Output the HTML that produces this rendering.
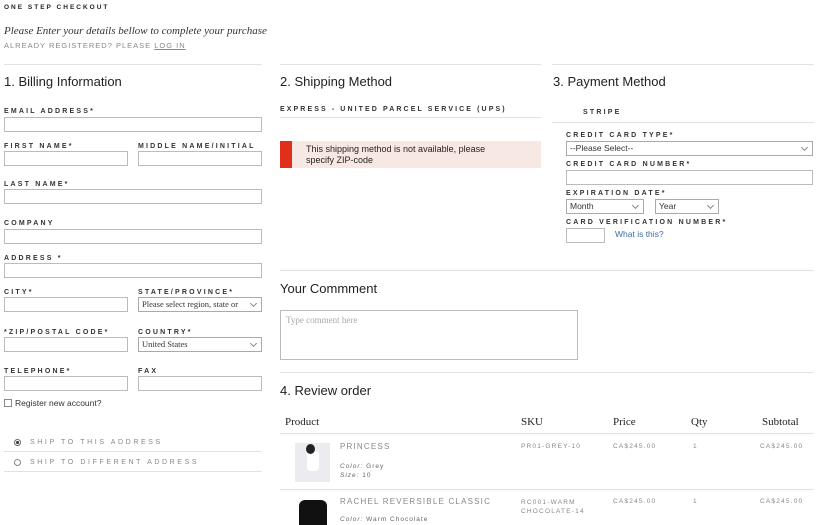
<!DOCTYPE html>
<html><head><meta charset="utf-8"><style>
*{box-sizing:border-box;margin:0;padding:0}
body{width:825px;height:525px;overflow:hidden;background:#fff;position:relative;font-family:"Liberation Sans",sans-serif;color:#222}
.a{position:absolute;white-space:nowrap}
.lb{position:absolute;font-size:7px;font-weight:bold;letter-spacing:2.2px;color:#333;white-space:nowrap}
.in{position:absolute;border:1px solid #bbb;background:#fff;height:15px}
.hr{position:absolute;height:1px;background:#e2e2e2}
.h{position:absolute;font-size:13px;color:#222;white-space:nowrap}
.sel{position:absolute;border:1px solid #aaa;height:15px;font-size:8.5px;padding:1px 3px;color:#333}
.sel:after{content:"";position:absolute;right:5px;top:3px;width:4px;height:4px;border-right:1px solid #888;border-bottom:1px solid #888;transform:rotate(45deg)}
.ser{font-family:"Liberation Serif",serif}
.g{color:#888;font-size:7px;letter-spacing:1.2px}
</style></head><body>
<div class="a" style="left:4px;top:4px;font-size:6.5px;font-weight:bold;letter-spacing:2px">ONE STEP CHECKOUT</div>
<div class="a ser" style="left:4px;top:25px;font-size:11px;font-style:italic;color:#333">Please Enter your details bellow to complete your purchase</div>
<div class="a" style="left:4px;top:41px;font-size:7.5px;letter-spacing:1px;color:#888">ALREADY REGISTERED? PLEASE <span style="text-decoration:underline">LOG IN</span></div>
<div class="hr" style="left:4px;top:64px;width:258px"></div>
<div class="hr" style="left:280px;top:64px;width:261px"></div>
<div class="hr" style="left:552px;top:64px;width:262px"></div>
<div class="h" style="left:4px;top:74px">1. Billing Information</div>
<div class="h" style="left:280px;top:74px">2. Shipping Method</div>
<div class="h" style="left:553px;top:74px">3. Payment Method</div>

<div class="lb" style="left:4px;top:108px">EMAIL ADDRESS*</div>
<div class="in" style="left:4px;top:117px;width:258px"></div>
<div class="lb" style="left:4px;top:143px">FIRST NAME*</div>
<div class="lb" style="left:138px;top:143px">MIDDLE NAME/INITIAL</div>
<div class="in" style="left:4px;top:151px;width:124px"></div>
<div class="in" style="left:138px;top:151px;width:124px"></div>
<div class="lb" style="left:4px;top:181px">LAST NAME*</div>
<div class="in" style="left:4px;top:189px;width:258px"></div>
<div class="lb" style="left:4px;top:220px">COMPANY</div>
<div class="in" style="left:4px;top:229px;width:258px"></div>
<div class="lb" style="left:4px;top:255px">ADDRESS *</div>
<div class="in" style="left:4px;top:263px;width:258px"></div>
<div class="lb" style="left:4px;top:289px">CITY*</div>
<div class="lb" style="left:138px;top:289px">STATE/PROVINCE*</div>
<div class="in" style="left:4px;top:297px;width:124px"></div>
<div class="sel ser" style="left:138px;top:297px;width:124px">Please select region, state or</div>
<div class="lb" style="left:4px;top:329px">*ZIP/POSTAL CODE*</div>
<div class="lb" style="left:138px;top:329px">COUNTRY*</div>
<div class="in" style="left:4px;top:337px;width:124px"></div>
<div class="sel ser" style="left:138px;top:337px;width:124px">United States</div>
<div class="lb" style="left:4px;top:368px">TELEPHONE*</div>
<div class="lb" style="left:138px;top:368px">FAX</div>
<div class="in" style="left:4px;top:376px;width:124px"></div>
<div class="in" style="left:138px;top:376px;width:124px"></div>
<div class="a" style="left:4px;top:399px;width:8px;height:8px;border:1px solid #888"></div>
<div class="a" style="left:15px;top:398px;font-size:8.5px;color:#333">Register new account?</div>
<div class="a" style="left:14px;top:439px;width:7px;height:7px;border:1px solid #666;border-radius:50%"><div style="margin:1px;width:3px;height:3px;background:#333;border-radius:50%"></div></div>
<div class="a g" style="left:30px;top:439px;letter-spacing:2.6px;font-size:7px">SHIP TO THIS ADDRESS</div>
<div class="hr" style="left:4px;top:451px;width:258px"></div>
<div class="a" style="left:14px;top:459px;width:7px;height:7px;border:1px solid #888;border-radius:50%"></div>
<div class="a g" style="left:30px;top:459px;letter-spacing:2.6px;font-size:7px">SHIP TO DIFFERENT ADDRESS</div>
<div class="hr" style="left:4px;top:471px;width:258px"></div>

<div class="lb" style="left:280px;top:106px;letter-spacing:2.1px">EXPRESS - UNITED PARCEL SERVICE (UPS)</div>
<div class="hr" style="left:280px;top:117px;width:261px"></div>
<div class="a" style="left:280px;top:141px;width:261px;height:27px;background:#f8e8e4"></div>
<div class="a" style="left:280px;top:141px;width:12px;height:27px;background:#e0301a"></div>
<div class="a" style="left:306px;top:144px;font-size:9px;line-height:10.5px;color:#222">This shipping method is not available, please<br>specify ZIP-code</div>

<div class="lb" style="left:583px;top:109px">STRIPE</div>
<div class="hr" style="left:552px;top:122px;width:262px"></div>
<div class="lb" style="left:566px;top:132px">CREDIT CARD TYPE*</div>
<div class="sel" style="left:566px;top:141px;width:247px">--Please Select--</div>
<div class="lb" style="left:566px;top:161px">CREDIT CARD NUMBER*</div>
<div class="in" style="left:566px;top:170px;width:247px"></div>
<div class="lb" style="left:566px;top:190px">EXPIRATION DATE*</div>
<div class="sel" style="left:566px;top:199px;width:78px">Month</div>
<div class="sel" style="left:655px;top:199px;width:64px">Year</div>
<div class="lb" style="left:566px;top:219px">CARD VERIFICATION NUMBER*</div>
<div class="in" style="left:566px;top:228px;width:39px"></div>
<div class="a" style="left:615px;top:229px;font-size:8.5px;color:#3a6ea5">What is this?</div>

<div class="hr" style="left:280px;top:270px;width:534px"></div>
<div class="h" style="left:280px;top:281px">Your Commment</div>
<div class="a ser" style="left:280px;top:310px;width:298px;height:50px;border:1px solid #bbb;font-size:9px;color:#aaa;padding:4px 5px">Type comment here</div>
<div class="hr" style="left:280px;top:372px;width:534px"></div>
<div class="h" style="left:280px;top:383px">4. Review order</div>

<div class="a ser" style="left:285px;top:416px;font-size:11px">Product</div>
<div class="a ser" style="left:521px;top:416px;font-size:11px">SKU</div>
<div class="a ser" style="left:613px;top:416px;font-size:11px">Price</div>
<div class="a ser" style="left:691px;top:416px;font-size:11px">Qty</div>
<div class="a ser" style="left:762px;top:416px;font-size:11px">Subtotal</div>
<div class="hr" style="left:280px;top:433px;width:534px"></div>
<div class="a" style="left:295px;top:443px;width:35px;height:39px;background:#ececf0"><div style="margin:8px auto 0;width:12px;height:20px;background:#fff;border-radius:4px"></div><div style="position:absolute;left:11px;top:1px;width:9px;height:10px;background:#222;border-radius:50%"></div></div>
<div class="a g" style="left:340px;top:442px;font-size:8px">PRINCESS</div>
<div class="a" style="left:340px;top:462px;font-size:6.5px;color:#666;letter-spacing:1px;line-height:9px"><i>Color:</i> Grey<br><i>Size:</i> 10</div>
<div class="a g" style="left:521px;top:443px;font-size:6.5px">PR01-GREY-10</div>
<div class="a g" style="left:613px;top:443px;font-size:6.5px">CA$245.00</div>
<div class="a g" style="left:693px;top:443px;font-size:6.5px">1</div>
<div class="a g" style="left:760px;top:443px;font-size:6.5px">CA$245.00</div>
<div class="hr" style="left:280px;top:489px;width:534px"></div>
<div class="a" style="left:299px;top:500px;width:28px;height:25px;background:#111;border-radius:6px 6px 0 0"></div>
<div class="a g" style="left:340px;top:497px;font-size:8px">RACHEL REVERSIBLE CLASSIC</div>
<div class="a" style="left:340px;top:516px;font-size:6.5px;color:#666;letter-spacing:1px"><i>Color:</i> Warm Chocolate</div>
<div class="a g" style="left:521px;top:498px;font-size:6.5px;line-height:9px">RC001-WARM<br>CHOCOLATE-14</div>
<div class="a g" style="left:613px;top:498px;font-size:6.5px">CA$245.00</div>
<div class="a g" style="left:693px;top:498px;font-size:6.5px">1</div>
<div class="a g" style="left:760px;top:498px;font-size:6.5px">CA$245.00</div>
</body></html>
